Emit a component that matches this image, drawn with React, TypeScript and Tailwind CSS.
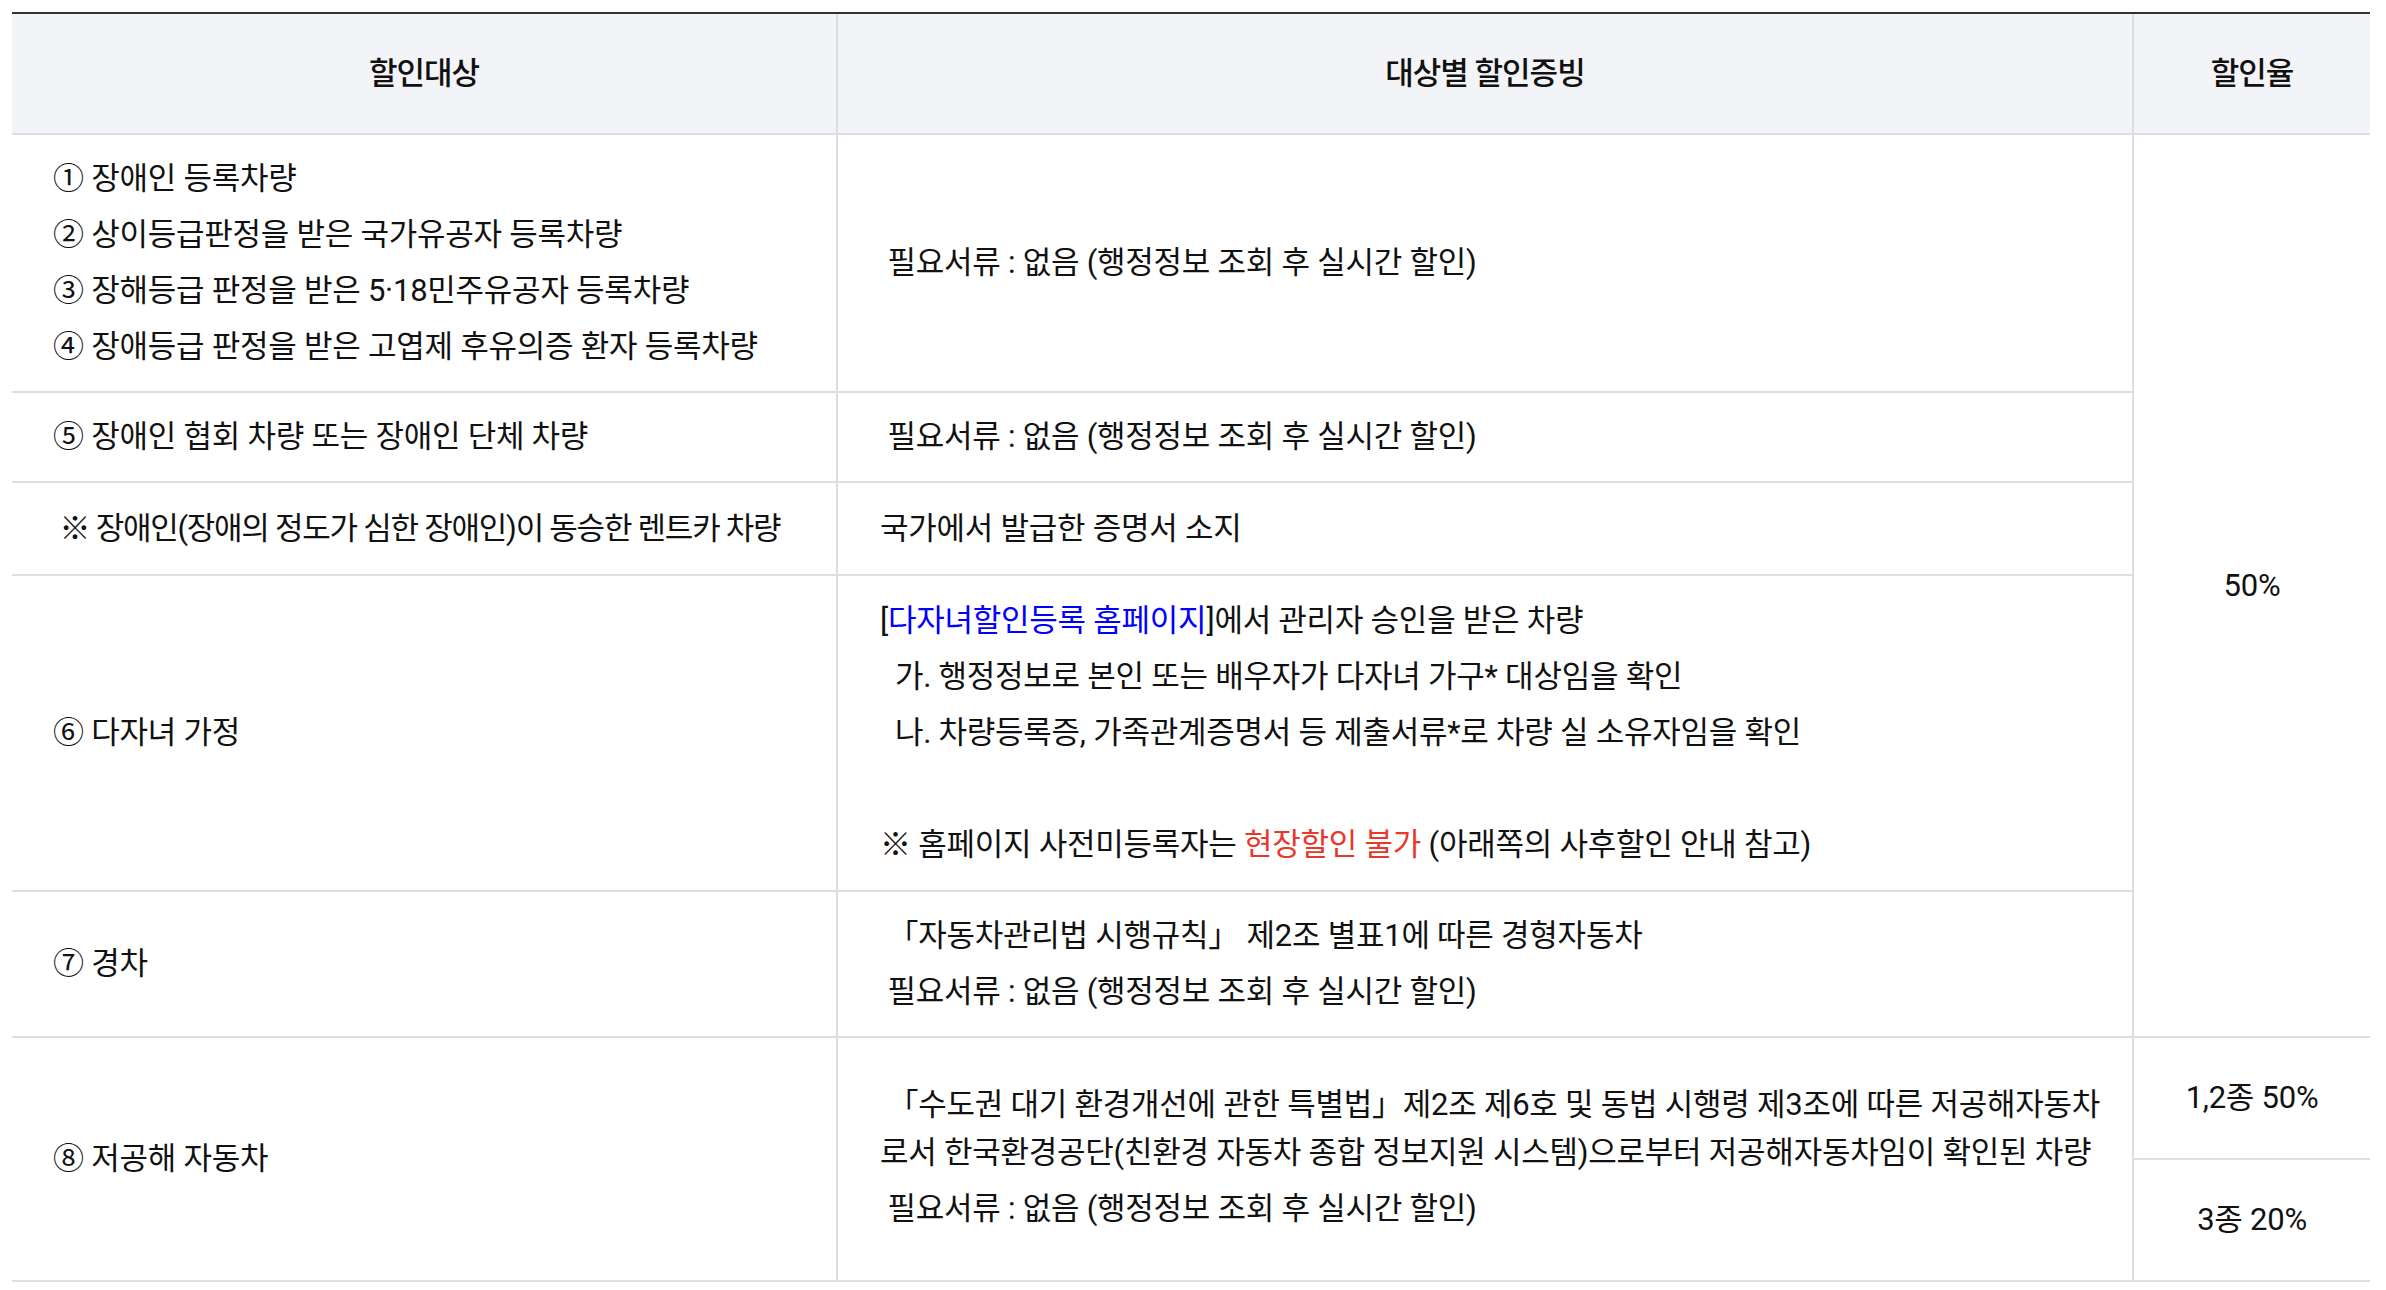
import React from "react";

const cellBase = "flex items-center border-b-2 border-[#dcdee3]";
const c1 = `${cellBase} border-r-2 pl-[41px]`;
const c2 = `${cellBase} border-r-2 pl-[42px]`;
const c3 = `${cellBase} justify-center`;
const hd = `${cellBase} justify-center bg-[#f3f4f8] font-medium tracking-[-1px]`;

export default function App() {
  return (
    <div className="min-h-screen bg-white pt-[12px] pl-[12px] text-[31px] leading-[56px] tracking-[-0.25px] text-[#111] [font-family:Roboto,'Noto_Sans_CJK_KR',sans-serif]">
      <div className="grid w-[2358px] grid-cols-[826px_1296px_236px] grid-rows-[121px_258px_90px_93px_316px_146px_122px_122px] border-t-2 border-[#333]">
        {/* header */}
        <div className={`${hd} border-r-2`}>할인대상</div>
        <div className={`${hd} border-r-2`}>대상별 할인증빙</div>
        <div className={hd}>할인율</div>

        {/* row 1 */}
        <div className={c1}>
          <div>
            <div>① 장애인 등록차량</div>
            <div>② 상이등급판정을 받은 국가유공자 등록차량</div>
            <div>③ 장해등급 판정을 받은 5·18민주유공자 등록차량</div>
            <div>④ 장애등급 판정을 받은 고엽제 후유의증 환자 등록차량</div>
          </div>
        </div>
        <div className={c2}>
          <div>&nbsp;필요서류 : 없음 (행정정보 조회 후 실시간 할인)</div>
        </div>
        <div className={`${c3} row-span-5`}>50%</div>

        {/* row 2 */}
        <div className={c1}>⑤ 장애인 협회 차량 또는 장애인 단체 차량</div>
        <div className={c2}>&nbsp;필요서류 : 없음 (행정정보 조회 후 실시간 할인)</div>

        {/* row 3 */}
        <div className={`${c1} tracking-[-1.25px]`}>&nbsp;※ 장애인(장애의 정도가 심한 장애인)이 동승한 렌트카 차량</div>
        <div className={c2}>국가에서 발급한 증명서 소지</div>

        {/* row 4 */}
        <div className={c1}>⑥ 다자녀 가정</div>
        <div className={c2}>
          <div>
            <div>
              [<span className="text-[#0000ff]">다자녀할인등록 홈페이지</span>]에서 관리자 승인을 받은 차량
            </div>
            <div>&nbsp;&nbsp;가. 행정정보로 본인 또는 배우자가 다자녀 가구* 대상임을 확인</div>
            <div>&nbsp;&nbsp;나. 차량등록증, 가족관계증명서 등 제출서류*로 차량 실 소유자임을 확인</div>
            <div>&nbsp;</div>
            <div>
              ※ 홈페이지 사전미등록자는 <span className="text-[#e8382c]">현장할인 불가</span> (아래쪽의 사후할인 안내 참고)
            </div>
          </div>
        </div>

        {/* row 5 */}
        <div className={c1}>⑦ 경차</div>
        <div className={c2}>
          <div>
            <div>&nbsp;「자동차관리법 시행규칙」 제2조 별표1에 따른 경형자동차</div>
            <div>&nbsp;필요서류 : 없음 (행정정보 조회 후 실시간 할인)</div>
          </div>
        </div>

        {/* row 6 */}
        <div className={`${c1} row-span-2`}>⑧ 저공해 자동차</div>
        <div className={`${c2} row-span-2`}>
          <div>
            <div className="leading-[48px] whitespace-nowrap">
              &nbsp;「수도권 대기 환경개선에 관한 특별법」제2조 제6호 및 동법 시행령 제3조에 따른 저공해자동차
              <br />
              로서 한국환경공단(친환경 자동차 종합 정보지원 시스템)으로부터 저공해자동차임이 확인된 차량
            </div>
            <div className="mt-[4px]">&nbsp;필요서류 : 없음 (행정정보 조회 후 실시간 할인)</div>
          </div>
        </div>
        <div className={c3}>1,2종 50%</div>
        <div className={c3}>3종 20%</div>
      </div>
    </div>
  );
}
